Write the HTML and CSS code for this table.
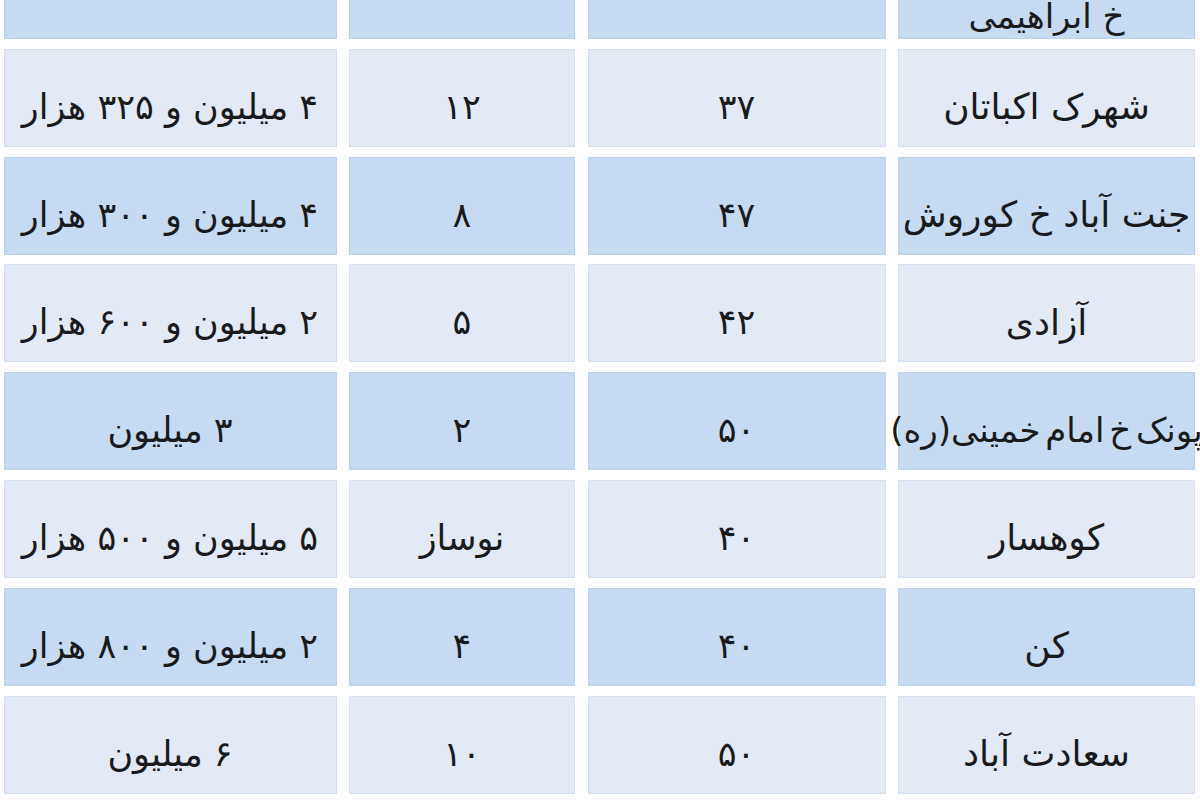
FILE: index.html
```html
<!DOCTYPE html>
<html lang="fa" dir="rtl">
<head>
<meta charset="utf-8">
<title>جدول قیمت</title>
<link rel="stylesheet" href="styles.css">
</head>
<body>
<div class="table">
  <div class="cell dark name top">خ ابراهیمی</div>
  <div class="cell dark"></div>
  <div class="cell dark"></div>
  <div class="cell dark price"></div>

  <div class="cell light name">شهرک اکباتان</div>
  <div class="cell light">۳۷</div>
  <div class="cell light">۱۲</div>
  <div class="cell light price">۴ میلیون و ۳۲۵ هزار</div>

  <div class="cell dark name">جنت آباد خ کوروش</div>
  <div class="cell dark">۴۷</div>
  <div class="cell dark">۸</div>
  <div class="cell dark price">۴ میلیون و ۳۰۰ هزار</div>

  <div class="cell light name">آزادی</div>
  <div class="cell light">۴۲</div>
  <div class="cell light">۵</div>
  <div class="cell light price">۲ میلیون و ۶۰۰ هزار</div>

  <div class="cell dark name long">پونک خ امام خمینی(ره)</div>
  <div class="cell dark">۵۰</div>
  <div class="cell dark">۲</div>
  <div class="cell dark price">۳ میلیون</div>

  <div class="cell light name">کوهسار</div>
  <div class="cell light">۴۰</div>
  <div class="cell light">نوساز</div>
  <div class="cell light price">۵ میلیون و ۵۰۰ هزار</div>

  <div class="cell dark name">کن</div>
  <div class="cell dark">۴۰</div>
  <div class="cell dark">۴</div>
  <div class="cell dark price">۲ میلیون و ۸۰۰ هزار</div>

  <div class="cell light name">سعادت آباد</div>
  <div class="cell light">۵۰</div>
  <div class="cell light">۱۰</div>
  <div class="cell light price">۶ میلیون</div>
</div>
</body>
</html>
```
FILE: styles.css
```css
html, body {
  margin: 0;
  padding: 0;
  background: #ffffff;
  overflow: hidden;
}
body {
  width: 1200px;
  height: 800px;
  font-family: "DejaVu Sans", sans-serif;
  color: #1a1a1c;
}
.table {
  direction: rtl;
  display: grid;
  grid-template-columns: 297px 298px 226px 333px;
  grid-auto-rows: 98px;
  column-gap: 12.5px;
  row-gap: 9.8px;
  padding: 0 5px 0 3px;
  margin-top: -59px;
}
.cell {
  display: flex;
  align-items: center;
  justify-content: center;
  padding-top: 18px;
  box-sizing: border-box;
  font-size: 35px;
  white-space: nowrap;
  overflow: hidden;
  box-shadow: inset 0 0 0 1px rgba(170, 190, 215, 0.25);
}
.name {
  overflow: visible;
  font-size: 36px;
  letter-spacing: -0.3px;
}
.long {
  font-size: 34px;
  word-spacing: -6px;
  letter-spacing: -0.6px;
}
.top {
  font-size: 34px;
  padding-top: 52px;
  overflow: hidden;
}
.dark {
  background: #c6dbf1;
}
.light {
  background: #e3eaf6;
}
```
